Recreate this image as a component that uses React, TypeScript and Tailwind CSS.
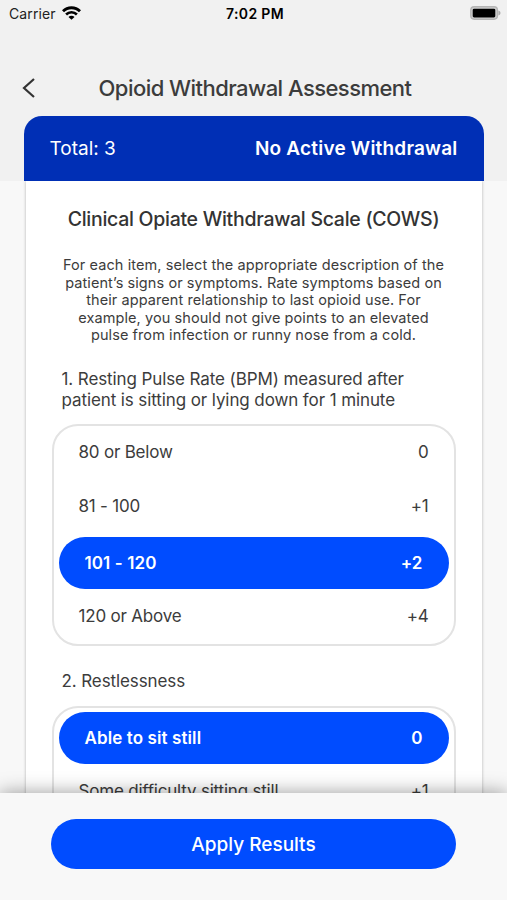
import { useState } from "react";

type Option = {
  label: string;
  points: number;
};

type Question = {
  title: string;
  options: Option[];
};

const questions: Question[] = [
  {
    title:
      "1. Resting Pulse Rate (BPM) measured after patient is sitting or lying down for 1 minute",
    options: [
      { label: "80 or Below", points: 0 },
      { label: "81 - 100", points: 1 },
      { label: "101 - 120", points: 2 },
      { label: "120 or Above", points: 4 },
    ],
  },
  {
    title: "2. Restlessness",
    options: [
      { label: "Able to sit still", points: 0 },
      { label: "Some difficulty sitting still", points: 1 },
    ],
  },
];

const formatPoints = (points: number) => (points > 0 ? `+${points}` : "0");

const StatusBar = () => (
  <div className="grid h-[26px] grid-cols-3 items-center pl-[9px] pr-[6px] text-black">
    <div className="flex items-center gap-[6px]">
      <span className="text-[14px] tracking-[0.1px] text-[#222]">Carrier</span>
      <svg width="19" height="14" viewBox="0 0 19 14" fill="none">
        <path d="M1 5.3a12 12 0 0 1 17 0" stroke="black" strokeWidth="2.9" />
        <path d="M4.1 8.5a7.6 7.6 0 0 1 10.8 0" stroke="black" strokeWidth="2.6" />
        <path d="M9.5 13.8 6.5 10.9a4.2 4.2 0 0 1 6 0z" fill="black" />
      </svg>
    </div>
    <span className="text-center text-[14px] font-semibold tracking-[0.35px] whitespace-nowrap">
      7:02 PM
    </span>
    <div className="flex justify-end">
      <svg width="31" height="14" viewBox="0 0 31 14">
        <rect x="0.8" y="0.8" width="26.6" height="12.4" rx="3.4" fill="#d0d0d0" stroke="#b5b5b5" strokeWidth="1.4" />
        <rect x="2.7" y="2.7" width="22.6" height="8.8" rx="1.4" fill="black" />
        <path d="M28.4 4.6c2.8.8 2.8 4 0 4.8z" fill="#adadad" />
      </svg>
    </div>
  </div>
);

type QuestionBlockProps = {
  question: Question;
  selected: number;
  onSelect: (index: number) => void;
};

const QuestionBlock: React.FC<QuestionBlockProps> = ({
  question,
  selected,
  onSelect,
}) => (
  <div className="mb-[25.5px]">
    <h3 className="mb-[14px] pl-[10px] pr-8 text-[17px] leading-[20.7px] tracking-[-0.1px]">
      {question.title}
    </h3>
    <div className="rounded-[26px] border-2 border-[#e3e3e3]">
      {question.options.map((option, i) =>
        i === selected ? (
          <div key={option.label} className="px-[5px] pt-[3.5px] pb-[1.5px]">
            <button
              onClick={() => onSelect(i)}
              className="flex h-[52px] w-full items-center justify-between rounded-full bg-[#004cff] px-[26px] pt-[2px] text-[17px] font-semibold tracking-[0.1px] text-white"
            >
              <span>{option.label}</span>
              <span>{formatPoints(option.points)}</span>
            </button>
          </div>
        ) : (
          <button
            key={option.label}
            onClick={() => onSelect(i)}
            className="flex h-[53.5px] w-full items-center justify-between px-[25px] text-[17px] tracking-[-0.2px]"
          >
            <span>{option.label}</span>
            <span>{formatPoints(option.points)}</span>
          </button>
        )
      )}
    </div>
  </div>
);

const App = () => {
  const [answers, setAnswers] = useState<number[]>([2, 0]);

  const handleSelect = (question: number, option: number) => {
    const updated = [...answers];
    updated[question] = option;
    setAnswers(updated);
  };

  return (
    <div className="flex h-[900px] w-full flex-col overflow-hidden bg-[#f8f8f8] font-['Inter',sans-serif] text-[#3c3c3c]">
      <header className="flex h-[181px] shrink-0 flex-col bg-[#f1f1f1]">
        <StatusBar />
        <div className="mt-[45px] grid h-[34px] grid-cols-[24px_1fr_21px] items-center px-[22px]">
          <button aria-label="Back">
            <svg width="13" height="20" viewBox="0 0 13 20" fill="none" stroke="#333" strokeWidth="2.2">
              <path d="M12 1 2 10l10 9" />
            </svg>
          </button>
          <h1 className="text-center text-[22px] font-medium tracking-[-0.55px] whitespace-nowrap">
            Opioid Withdrawal Assessment
          </h1>
        </div>
        <div className="mx-[23.5px] mt-auto flex h-[65.5px] items-center justify-between rounded-t-[18px] bg-[#002fb5] px-[26px] pt-[2px] text-[19px] text-white">
          <span>Total: 3</span>
          <span className="font-semibold tracking-[0.2px]">
            No Active Withdrawal
          </span>
        </div>
      </header>

      <main className="min-h-0 flex-1 overflow-hidden">
        <div className="mx-[25.5px] bg-white px-[26px] pt-[25.5px] shadow-[0_0_3px_rgba(0,0,0,0.28)]">
          <h2 className="text-center text-[19.5px] leading-6 font-medium tracking-[-0.28px] whitespace-nowrap text-[#333]">
            Clinical Opiate Withdrawal Scale (COWS)
          </h2>
          <p className="mt-[25.5px] mb-[25px] text-center text-[14.5px] leading-[17.6px] tracking-[0.08px] whitespace-nowrap">
            For each item, select the appropriate description of the
            <br />
            patient’s signs or symptoms. Rate symptoms based on
            <br />
            their apparent relationship to last opioid use. For
            <br />
            example, you should not give points to an elevated
            <br />
            pulse from infection or runny nose from a cold.
          </p>
          {questions.map((question, i) => (
            <QuestionBlock
              key={question.title}
              question={question}
              selected={answers[i]}
              onSelect={(option) => handleSelect(i, option)}
            />
          ))}
        </div>
      </main>

      <footer className="z-10 h-[107px] shrink-0 bg-[#f8f8f8] px-[51px] pt-[26px] shadow-[0_0_18px_rgba(0,0,0,0.4)]">
        <button className="h-[50px] w-full rounded-full bg-[#004cff] pt-[2px] text-[19px] font-medium text-white">
          Apply Results
        </button>
      </footer>
    </div>
  );
};

export default App;
